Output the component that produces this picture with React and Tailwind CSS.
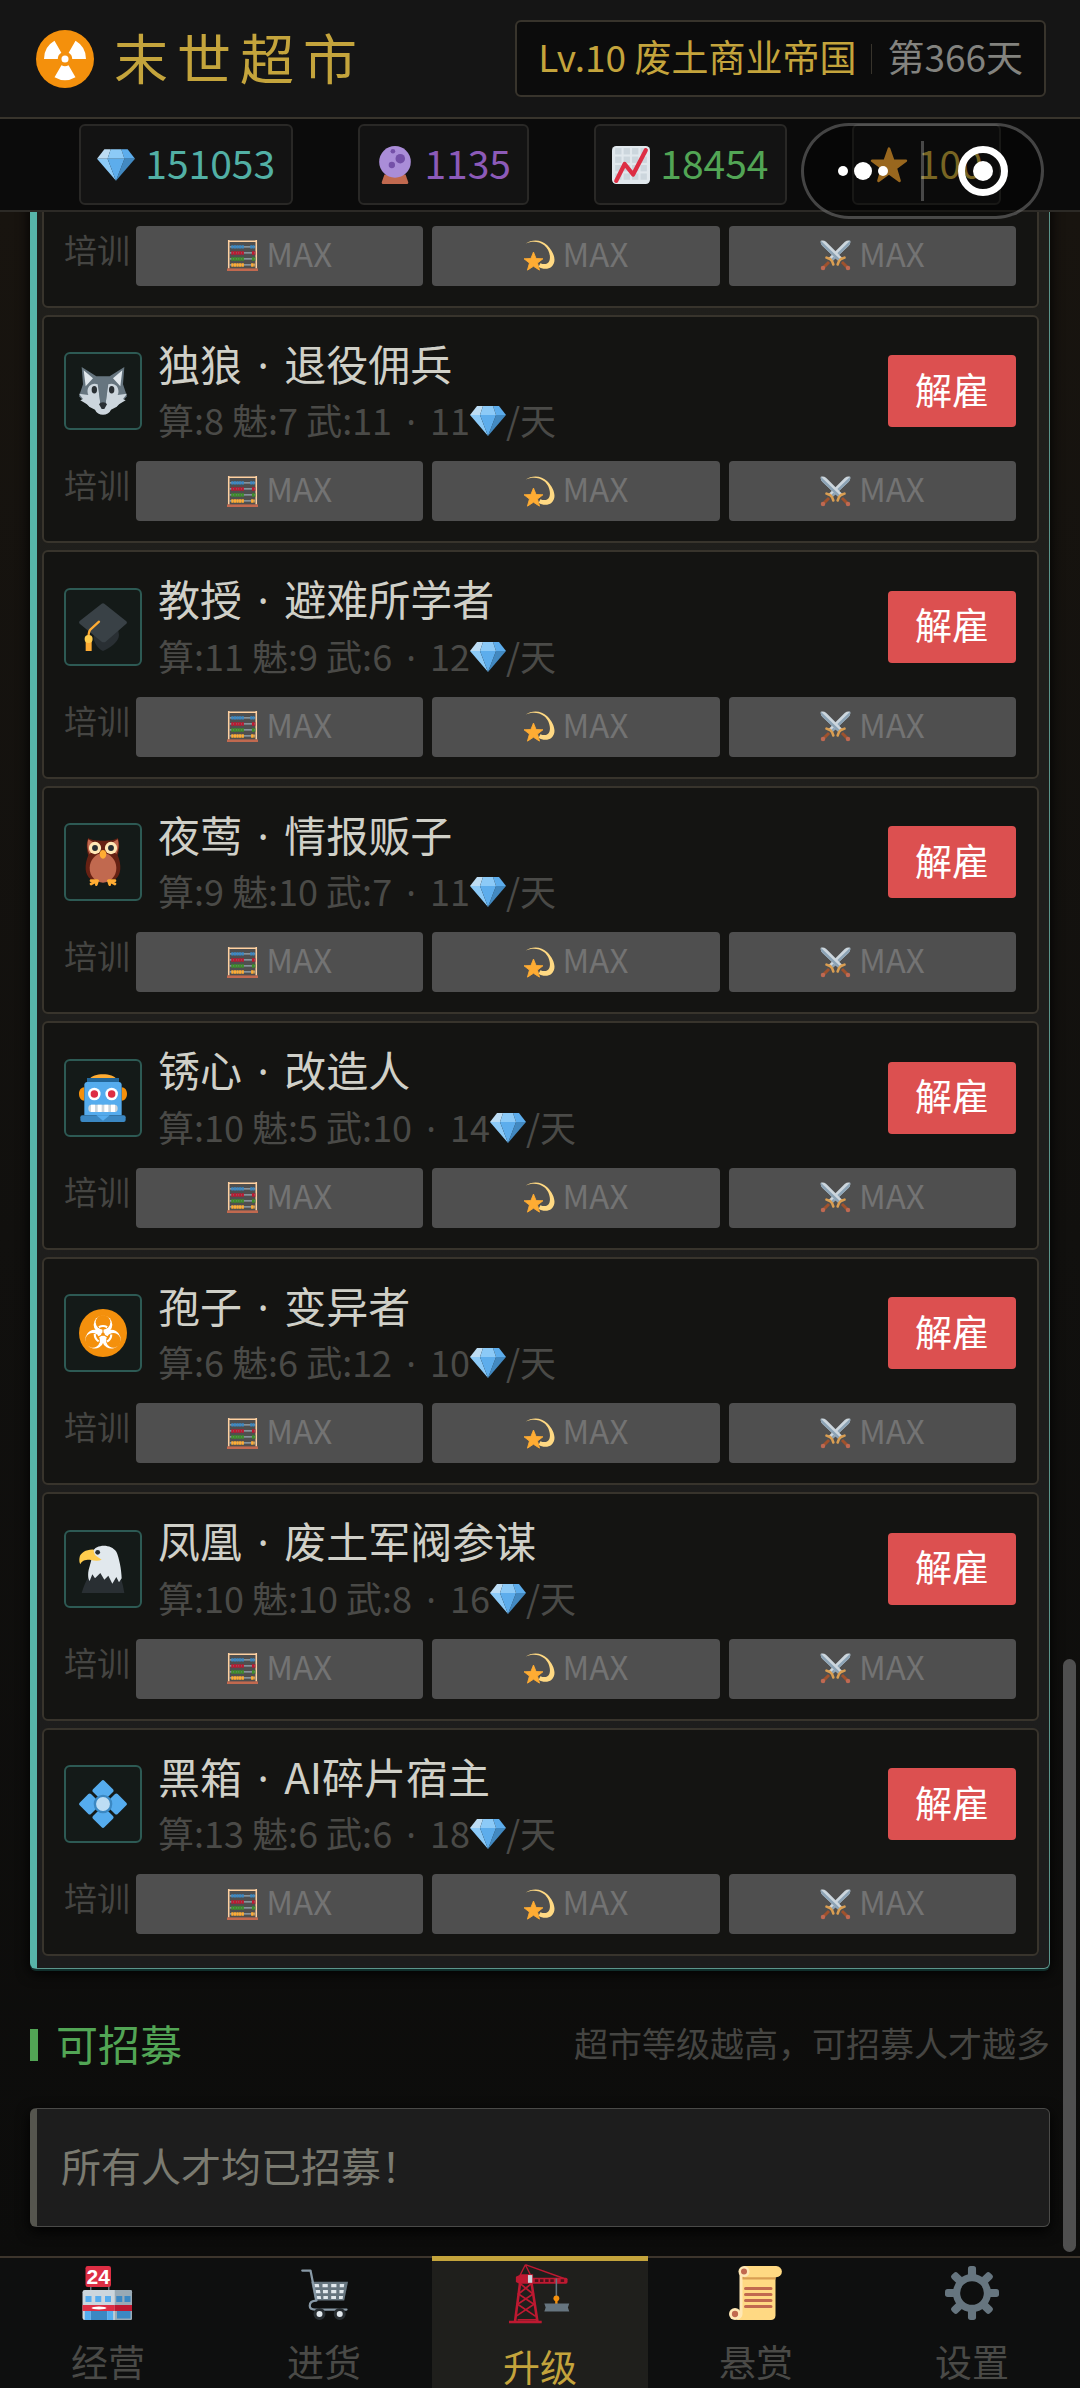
import React from "react";

const GemIcon = ({ className }) => (
  <svg viewBox="0 0 36 36" className={className} aria-hidden="true">
    <path fill="#bdddf4" d="M13 3H7l-7 9h10z" />
    <path fill="#5dadec" d="M36 12l-7-9h-6l3 9z" />
    <path fill="#4289c1" d="M26 12h10L18 33z" />
    <path fill="#8ccaf7" d="M10 12H0l18 21zm3-9l-3 9h16l-3-9z" />
    <path fill="#5dadec" d="M18 33l-8-21h16z" />
  </svg>
);

const RadiationIcon = ({ className }) => {
  const blade =
    "M20.2 21.9L24.5 29.3A13 13 0 0 1 11.5 29.3L15.8 21.9A4.5 4.5 0 0 0 20.2 21.9Z";
  return (
    <svg viewBox="0 0 36 36" className={className} aria-hidden="true">
      <circle cx="18" cy="18" r="18" fill="#f4900c" />
      <g fill="#fff">
        <circle cx="18" cy="18" r="2.2" />
        <path d={blade} />
        <path d={blade} transform="rotate(120 18 18)" />
        <path d={blade} transform="rotate(240 18 18)" />
      </g>
    </svg>
  );
};

const CrystalBallIcon = ({ className }) => (
  <svg viewBox="0 0 36 36" className={className} aria-hidden="true">
    <path fill="#c1694f" d="M8 27h20l2.5 7c.4 1.2-.4 2-1.5 2H7c-1.1 0-1.9-.8-1.5-2z" />
    <circle cx="18" cy="15" r="15" fill="#aa8dd8" />
    <circle cx="23" cy="12" r="4.5" fill="#7450a8" />
    <circle cx="15" cy="18" r="3" fill="#7450a8" />
    <circle cx="16" cy="5" r="2.2" fill="#7450a8" />
  </svg>
);

const ChartIcon = ({ className }) => (
  <svg viewBox="0 0 36 36" className={className} aria-hidden="true">
    <rect width="36" height="36" rx="4" fill="#e1e8ed" />
    <g fill="#ccd6dd">
      {[2, 10, 18, 26].map((y) =>
        [3, 11, 19, 27].map((x) => (
          <rect key={`${x}-${y}`} x={x} y={y} width="6" height="6" />
        ))
      )}
    </g>
    <path
      d="M4 33L12 17l8 10L32 4"
      fill="none"
      stroke="#dd2e44"
      strokeWidth="4"
      strokeLinecap="round"
      strokeLinejoin="round"
    />
  </svg>
);

const StarIcon = ({ className }) => (
  <svg viewBox="0 0 36 36" className={className} aria-hidden="true">
    <path
      fill="#ffac33"
      stroke="#ffac33"
      strokeWidth="2.5"
      strokeLinejoin="round"
      d="M18 2.500l4 11.500h12l-9.600 7L28 33l-10-7.200L8 33l3.600-12L2 14h12z"
    />
  </svg>
);

const AbacusIcon = ({ className }) => (
  <svg viewBox="0 0 36 36" className={className} aria-hidden="true">
    <path
      fill="none"
      stroke="#ffd1a1"
      strokeWidth="1.8"
      d="M2 0v33M34 0v33M2 1.500h32"
    />
    <path stroke="#99aab5" strokeWidth="1.5" d="M3 8h30M3 15h30M3 22h30M3 29h30" />
    <g strokeWidth="4" strokeDasharray="2.6 .4">
      <path stroke="#3b88c3" d="M5 8h15M27 8h5" />
      <path stroke="#be1931" d="M5 15h15M29 15h4" />
      <path stroke="#3e8e2a" d="M5 22h15M29 22h4" />
      <path stroke="#ffac33" d="M5 29h15M28 29h4" />
    </g>
    <rect y="33" width="36" height="3" fill="#c1694f" />
  </svg>
);

const DizzyIcon = ({ className }) => (
  <svg viewBox="0 0 36 36" className={className} aria-hidden="true">
    <path
      fill="#ffd983"
      d="M2 4C9-1 20-1 27 6c9 9 11 20 5 25-4 3.500-11 3-15 0l2-4c5 2 9 1 10.500-3 2-6-1-14-6-18C17 1 9 1 2 4z"
    />
    <path
      fill="#ffac33"
      stroke="#ffac33"
      strokeLinejoin="round"
      d="M11 14l3 7.500 8 .3-6.300 5L18 35l-7-4.500L4 35l2.300-8.200L0 21.800l8-.3z"
    />
  </svg>
);

const Sword = () => (
  <>
    <path fill="#ccd6dd" d="M1 1c2-1 4-.5 6 1l19 19-4 4L3 7C1 5 .5 3 1 1z" />
    <path fill="#8ca3b5" d="M1 1l23 22-2 2L3 7C1 5 .5 3 1 1z" />
    <path stroke="#d99e52" strokeWidth="3" strokeLinecap="round" d="M20.500 28.500l1.500-4 2.500-2.500 4-1.500" fill="none" />
    <path stroke="#a0522d" strokeWidth="3.4" d="M25.500 25.500l6 6" />
    <circle cx="32.500" cy="32.500" r="2.6" fill="#bf6952" />
  </>
);

const SwordsIcon = ({ className }) => (
  <svg viewBox="0 0 36 36" className={className} aria-hidden="true">
    <g transform="matrix(-1 0 0 1 36 0)">
      <Sword />
    </g>
    <Sword />
  </svg>
);

const WolfIcon = ({ className }) => (
  <svg viewBox="0 0 36 36" className={className} aria-hidden="true">
    <path fill="#66757f" d="M2 0l11 7h10L34 0l-1 13 3 9-8 8H8l-8-8 3-9z" />
    <path fill="#e1e8ed" d="M3.500 2.500l7 6-5.500 6zM32.500 2.500l-7 6 5.500 6z" />
    <path
      fill="#ccd6dd"
      d="M14 13c-6-2-9 4-7 8l-7-1 3 4-2 1 5 3 2 2 4 2c2 5 10 5 12 0l4-2 2-2 5-3-2-1 3-4-7 1c2-4-1-10-7-8l-2 14h-4z"
    />
    <path fill="#66757f" d="M14.500 12h7L20 28h-4z" />
    <ellipse cx="11.500" cy="17" rx="2" ry="2.8" fill="#292f33" />
    <ellipse cx="24.500" cy="17" rx="2" ry="2.8" fill="#292f33" />
    <path fill="#292f33" d="M15 28c1-2 5-2 6 0l-2 3.500h-2z" />
  </svg>
);

const GradCapIcon = ({ className }) => (
  <svg viewBox="0 0 36 36" className={className} aria-hidden="true">
    <path fill="#292f33" d="M11 21l18-3 1 6c0 5-7 10-12 12-3-1-6-5-7-9z" />
    <path fill="#394146" d="M17 .6c.6-.6 1.4-.6 2 0l16.500 13c.6.6.6 1.4 0 2L20 29c-.6.6-2.400.6-3 0L.5 15.500c-.6-.6-.6-1.400 0-2z" />
    <path fill="none" stroke="#ffac33" strokeWidth="1.7" strokeLinecap="round" d="M15 14L8.500 20c-1 1-1.300 3-1.500 6" />
    <path fill="#ffac33" d="M5 28h4.500v8.500h-4.500z" />
    <circle cx="7.2" cy="27" r="3" fill="#ffcc4d" />
  </svg>
);

const OwlIcon = ({ className }) => (
  <svg viewBox="0 0 36 36" className={className} aria-hidden="true">
    <path fill="#662113" d="M7 0c3 2 6 2 11 2s8 0 11-2c2 4 1 10 0 13 3 7 3 15-2 18H9c-5-3-5-11-2-18C6 10 5 4 7 0z" />
    <path fill="#c1694f" d="M7 1c3 2 5 3 8 4l-7 7C6 9 6 4 7 1zM29 1c-3 2-5 3-8 4l7 7c2-3 2-8 1-11z" />
    <ellipse cx="18" cy="22.5" rx="10" ry="11" fill="#c1694f" />
    <circle cx="12" cy="7.5" r="4.6" fill="#ffe8b6" />
    <circle cx="24" cy="7.5" r="4.6" fill="#ffe8b6" />
    <circle cx="12" cy="7.5" r="2.2" fill="#292f33" />
    <circle cx="24" cy="7.5" r="2.2" fill="#292f33" />
    <path fill="#ffac33" d="M15.500 12c0-4 5-4 5 0 0 2-1 3.500-2.500 3.500S15.500 14 15.500 12z" />
    <path stroke="#ffac33" strokeWidth="2" strokeLinecap="round" fill="none" d="M9 32h5l-5 2.500M14 32l-1 3M27 32h-5l5 2.500M22 32l1 3" />
  </svg>
);

const RobotIcon = ({ className }) => (
  <svg viewBox="0 0 36 36" className={className} aria-hidden="true">
    <path fill="#f4900c" d="M4 10c-3 0-4 3-4 5s1 5 4 5zM32 10c3 0 4 3 4 5s-1 5-4 5z" />
    <path fill="#ffac33" d="M8 4c2-5 18-5 20 0z" />
    <path fill="#226699" d="M6 3h24v5H6z" />
    <path fill="#55acee" d="M4 8c0-1 1-2 2-2h24c1 0 2 1 2 2v23H4z" />
    <rect x="1" y="31" width="34" height="5" rx="1.5" fill="#3b88c3" />
    <path fill="#55acee" d="M13 31h10l-5 4z" />
    <circle cx="11.5" cy="15" r="4.7" fill="#fff" />
    <circle cx="24.5" cy="15" r="4.7" fill="#fff" />
    <circle cx="11.5" cy="15" r="2.8" fill="#dd2e44" />
    <circle cx="24.5" cy="15" r="2.8" fill="#dd2e44" />
    <rect x="7" y="23" width="22" height="5.5" rx="2.5" fill="#ccd6dd" />
    <path fill="#fff" d="M9 23h3v5.500H9zM14 23h3v5.500h-3zM19 23h3v5.500h-3zM24 23h3v5.500h-3z" />
  </svg>
);

const BiohazardIcon = ({ className }) => (
  <svg viewBox="0 0 36 36" className={className} aria-hidden="true">
    <circle cx="18" cy="18" r="18" fill="#f4900c" />
    {[0, 120, 240].map((angle) => (
      <circle key={angle} cx="18" cy="11.8" r="7" fill="#fff" transform={`rotate(${angle} 18 19)`} />
    ))}
    {[0, 120, 240].map((angle) => (
      <g key={angle} fill="#f4900c" transform={`rotate(${angle} 18 19)`}>
        <circle cx="18" cy="10" r="5.5" />
        <path d="M17.600 14h.8v4h-.8z" />
      </g>
    ))}
    <circle
      cx="18"
      cy="19"
      r="6.2"
      fill="none"
      stroke="#fff"
      strokeWidth="1.6"
      strokeDasharray="6.49 6.49"
      transform="rotate(-120 18 19)"
    />
    <circle cx="18" cy="19" r="1.3" fill="#f4900c" />
  </svg>
);

const EagleIcon = ({ className }) => (
  <svg viewBox="0 0 36 36" className={className} aria-hidden="true">
    <path fill="#292f33" d="M2 36c2-6 4-12 8-15h18c4 3 5 9 6 15z" />
    <path
      fill="#e1e8ed"
      d="M10 5c3-6 14-6 18 0 2 4 4 14 4 20l-2 3-2-4-3 5-3-6-3 3-3-5-4 4-2-3-2 5c-2-3-1-8 0-11 1-4 2-6 1-8z"
    />
    <path fill="#ffcc4d" d="M11 3.500C6 3 1 6 .5 9c-.5 2-.3 4 .5 5.500 1-2.500 3-3.500 7-3.500 4 1 7 1 9 0l-3-2c-2-1-3-3-3-5.500z" />
    <circle cx="14" cy="5.5" r="1.8" fill="#292f33" />
  </svg>
);

const BlossomIcon = ({ className }) => (
  <svg viewBox="0 0 36 36" className={className} aria-hidden="true">
    <g fill="#55acee">
      {[0, 90, 180, 270].map((angle) => (
        <path
          key={angle}
          transform={`rotate(${angle} 18 18)`}
          d="M17 .5c.6-.6 1.4-.6 2 0l6.500 6.500c.6.6.6 1.4 0 2L20 14.500h-4L10.500 9c-.6-.6-.6-1.400 0-2z"
        />
      ))}
    </g>
    <circle cx="18" cy="18" r="7" fill="#3b88c3" />
    <circle cx="18" cy="18" r="5.2" fill="#bdddf4" />
  </svg>
);

const StoreIcon = ({ className }) => (
  <svg viewBox="0 0 36 36" className={className} aria-hidden="true">
    <path fill="#66757f" d="M6 13h1v4H6zM18 13h1v4h-1z" />
    <rect x="3" width="17" height="14" rx="1.5" fill="#dd2e44" />
    <text
      x="11.5"
      y="12"
      textAnchor="middle"
      fontSize="14"
      fontWeight="700"
      fontFamily="Liberation Sans, sans-serif"
      fill="#fff">
      24
    </text>
    <rect x="1" y="16" width="33" height="20" rx="1.5" fill="#ccd6dd" />
    <path fill="#99aab5" d="M22.500 16H33c.6 0 1 .4 1 1v18c0 .6-.4 1-1 1H22.500z" />
    <path fill="#55acee" d="M3 20h4v4H3zM9.500 20h4v4h-4zM16 20h4v4h-4z" />
    <path fill="#3b88c3" d="M23.500 20h4v4h-4zM29 20h4v4h-4zM6.500 30h11v6h-11zM24 30h9v5h-9z" />
    <path fill="#55acee" d="M2.500 30h4v6h-4zM17.500 30h4v6h-4z" />
    <path fill="#dd2e44" d="M1 26h21.500v4H1z" />
    <path fill="#be1931" d="M22.500 26H34v4H22.500z" />
    <ellipse cx="12" cy="28" rx="5" ry="1" fill="#fff" />
  </svg>
);

const CartIcon = ({ className }) => (
  <svg viewBox="0 0 36 36" className={className} aria-hidden="true">
    <path fill="#66757f" d="M9.500 10.500H34L31.500 23H12z" />
    <g fill="#e1e8ed">
      <path d="M11.500 12h3l.4 2.200h-3zM17 12h3.500v2.200H17zM22.800 12h3.500v2.200h-3.500zM28.500 12h3l-.3 2.200h-2.700z" />
      <path d="M12.300 16h3l.4 2.200h-3zM17.300 16h3.300v2.200h-3.300zM22.800 16h3.400v2.200h-3.400zM28.300 16h2.900l-.3 2.200h-2.600z" />
      <path d="M13 20h2.800l.3 2H13.400zM17.600 20h3v2h-3zM22.800 20H26v2h-3.200zM28 20h2.700l-.3 2H28z" />
    </g>
    <path
      fill="none"
      stroke="#8899a6"
      strokeWidth="1.5"
      strokeLinecap="round"
      strokeLinejoin="round"
      d="M3.500 3H9l4 20c-3 0-4.500 1.500-4.500 3.500S10 29 12 29h21"
    />
    <circle cx="15" cy="32" r="3" fill="#e1e8ed" stroke="#292f33" strokeWidth="2" />
    <circle cx="28.5" cy="32" r="3" fill="#e1e8ed" stroke="#292f33" strokeWidth="2" />
  </svg>
);

const CraneIcon = ({ className }) => (
  <svg viewBox="0 0 36 36" className={className} aria-hidden="true">
    <g fill="none" stroke="#be1931">
      <path strokeWidth="1.5" d="M6.500 11L3.500 34M13 11l3.500 23" />
      <path strokeWidth="1" d="M6.500 12l7.500 6-9 6 10.500 7M13 12l-7.500 6 9 6L4 31" />
      <path strokeWidth=".8" d="M9.500 1L6 8M9.500 1l3 6M9.500 1L32 9" />
      <path strokeWidth="1" d="M5 33h11" />
    </g>
    <rect x="12" y="8.5" width="22" height="3.5" rx="1" fill="#be1931" />
    <path fill="#50101a" d="M15 9.500h2v1.500h-2zM18 9.500h2v1.500h-2zM21 9.500h2v1.500h-2zM24 9.500h2v1.500h-2zM30 9.500h2v1.500h-2z" />
    <path fill="#be1931" d="M0 33.500h19V35H0zM4 8l3-1.500h7V12H6L4 11z" />
    <path fill="#ccd6dd" d="M11 7h2.500v4.500H11z" />
    <path stroke="#66757f" strokeWidth=".9" d="M27.500 9v11" />
    <circle cx="27.5" cy="20.5" r="1.7" fill="#f4900c" />
    <path stroke="#f4900c" strokeWidth="1.4" d="M27.500 20v4" />
    <path fill="#66757f" d="M20.500 23.500h14.500l-.8 2.300.8 2.400H20.500l.8-2.400z" />
  </svg>
);

const ScrollIcon = ({ className }) => (
  <svg viewBox="0 0 36 36" className={className} aria-hidden="true">
    <path fill="#ffe8b6" d="M7 4h4v32H4c2 0 3-2 3-4z" />
    <path fill="#ffd983" d="M9 4h22v29c0 2-1.500 3-3 3H4c3 0 5-2 5-4z" />
    <path fill="#d99e52" d="M9 6h22v3H9z" />
    <path fill="#ffd983" d="M10 0h21.500a3.700 3.700 0 0 1 0 7.500H10z" />
    <circle cx="10" cy="3.7" r="3.7" fill="#ffe8b6" />
    <circle cx="10" cy="3.7" r="2" fill="#c1694f" />
    <circle cx="4" cy="32" r="4" fill="#ffe8b6" />
    <circle cx="4" cy="32" r="2.1" fill="#c1694f" />
    <path stroke="#c1694f" strokeWidth="2" strokeLinecap="round" d="M11 15h17M11 19h17M11 23h17M11 27h17" />
  </svg>
);

const GearIcon = ({ className }) => (
  <svg viewBox="0 0 36 36" className={className} aria-hidden="true">
    <g fill="#66757f">
      {[0, 45, 90, 135, 180, 225, 270, 315].map((angle) => (
        <rect
          key={angle}
          x="15.3"
          width="5.4"
          height="8"
          rx="1.8"
          transform={`rotate(${angle} 18 18)`}
        />
      ))}
    </g>
    <circle cx="18" cy="18" r="10.3" fill="none" stroke="#66757f" strokeWidth="4.8" />
  </svg>
);

const resources = [
  { name: "宝石", value: 151053, Icon: GemIcon, color: "text-[#52b0a5]" },
  { name: "水晶", value: 1135, Icon: CrystalBallIcon, color: "text-[#8c5ab8]" },
  { name: "营收", value: 18454, Icon: ChartIcon, color: "text-[#52a555]" },
  { name: "声望", value: 100, Icon: StarIcon, color: "text-[#c9a93b]" },
];

const staff = [
  { name: "独狼", role: "退役佣兵", calc: 8, charm: 7, force: 11, wage: 11, Icon: WolfIcon },
  { name: "教授", role: "避难所学者", calc: 11, charm: 9, force: 6, wage: 12, Icon: GradCapIcon },
  { name: "夜莺", role: "情报贩子", calc: 9, charm: 10, force: 7, wage: 11, Icon: OwlIcon },
  { name: "锈心", role: "改造人", calc: 10, charm: 5, force: 10, wage: 14, Icon: RobotIcon },
  { name: "孢子", role: "变异者", calc: 6, charm: 6, force: 12, wage: 10, Icon: BiohazardIcon },
  { name: "凤凰", role: "废土军阀参谋", calc: 10, charm: 10, force: 8, wage: 16, Icon: EagleIcon },
  { name: "黑箱", role: "AI碎片宿主", calc: 13, charm: 6, force: 6, wage: 18, Icon: BlossomIcon },
];

const skills = [
  { key: "calc", Icon: AbacusIcon },
  { key: "charm", Icon: DizzyIcon },
  { key: "force", Icon: SwordsIcon },
];

const tabs = [
  { label: "经营", Icon: StoreIcon },
  { label: "进货", Icon: CartIcon },
  { label: "升级", Icon: CraneIcon, active: true },
  { label: "悬赏", Icon: ScrollIcon },
  { label: "设置", Icon: GearIcon },
];

const TrainingRow = () => (
  <div className="flex items-start">
    <span className="mr-1.5 shrink-0 text-[33px] leading-[46px] text-[#454542]">
      培训
    </span>
    <div className="grid flex-1 grid-cols-3 gap-[9px]">
      {skills.map(({ key, Icon }) => (
        <button
          key={key}
          type="button"
          disabled
          className="flex h-[60px] items-center justify-center gap-2 rounded-[4px] bg-[#4f4f4f] text-[33px] text-[#737373]">
          <Icon className="size-[31px]" />
          <span className="pb-1">MAX</span>
        </button>
      ))}
    </div>
  </div>
);

// the CJK face draws a full-width dot, so take it from the Latin one
const Dot = () => (
  <span className="mx-1.5 font-['Noto_Sans',sans-serif] leading-none">·</span>
);

const cardClass =
  "rounded-[6px] border-2 border-[#38342c] bg-[#141412] pr-[21px] pb-5 pl-5";

const StaffCard = ({ person }) => {
  const { name, role, calc, charm, force, wage, Icon } = person;
  return (
    <li className={`${cardClass} pt-5`}>
      <div className="mb-[15px] flex items-center">
        <div className="flex size-[78px] shrink-0 items-center justify-center rounded-[6px] border-2 border-[#2d5a54] bg-[#141a18]">
          <Icon className="size-12" />
        </div>
        <div className="ml-4 min-w-0 flex-1">
          <h3 className="mb-[3px] text-[42px] leading-tight text-[#d0d0c8]">
            {name} <Dot /> {role}
          </h3>
          <p className="text-[36px] leading-[54px] text-[#4a4a47]">
            算:{calc} 魅:{charm} 武:{force} <Dot /> {wage}
            <GemIcon className="inline size-9 align-[-4px]" />
            /天
          </p>
        </div>
        <button
          type="button"
          className="h-[72px] rounded-[4px] bg-[#dc5050] px-[27px] pb-1 text-[37px] text-white">
          解雇
        </button>
      </div>
      <TrainingRow />
    </li>
  );
};

const Capsule = () => (
  <div className="absolute top-[123px] right-9 z-10 flex h-24 w-[243px] items-center rounded-full border-[3px] border-white/25 bg-black/40">
    <button type="button" aria-label="更多" className="flex flex-1 items-center justify-center gap-1.5">
      <span className="size-[10px] rounded-full bg-white" />
      <span className="size-[18px] rounded-full bg-white" />
      <span className="size-[10px] rounded-full bg-white" />
    </button>
    <span className="h-[60px] w-[3px] bg-white/25" />
    <button type="button" aria-label="关闭" className="flex flex-1 items-center justify-center">
      <span className="flex size-[50px] items-center justify-center rounded-full border-[7px] border-white">
        <span className="size-5 rounded-full bg-white" />
      </span>
    </button>
  </div>
);

const App = () => {
  return (
    <div className="relative flex h-screen flex-col overflow-hidden bg-[#0d0d0d] font-['Noto_Sans_CJK_SC',sans-serif]">
      <header className="flex h-[119px] shrink-0 items-center justify-between border-b-2 border-[#38342c] bg-[#151515] pr-[34px] pl-9">
        <div className="flex items-center gap-5">
          <RadiationIcon className="size-[58px]" />
          <h1 className="pb-1 text-[54px] leading-none tracking-[9px] text-[#c4a43c]">
            末世超市
          </h1>
        </div>
        <div className="flex h-[77px] items-center rounded-[6px] border-2 border-[#38342c] bg-[#0c0c0c] px-[21px] text-[37px]">
          <span className="pb-1 text-[#c4a43c]">Lv.10 废土商业帝国</span>
          <span className="mx-[15px] h-[30px] w-px bg-[#38342c]" />
          <span className="pb-1 text-[#83837f]">第366天</span>
        </div>
      </header>

      <div className="flex h-[93px] shrink-0 items-center justify-evenly border-b-2 border-[#2c2a26] bg-[#0b0b0b] px-[14px]">
        {resources.map(({ name, value, Icon, color }) => (
          <div
            key={name}
            title={name}
            className={`flex h-[81px] items-center gap-2.5 rounded-[6px] border-2 border-[#292826] bg-[#131313] px-4 text-[39px] ${color}`}>
            <Icon className="size-[38px]" />
            <span className="pb-1">{value}</span>
          </div>
        ))}
      </div>

      <Capsule />

      <main className="relative flex min-h-0 flex-1 flex-col justify-end overflow-hidden bg-linear-to-b from-[#18140f] via-[#11100e] to-[#0c0c0b] px-[30px] pb-[29px]">
        <ul className="flex shrink-0 flex-col gap-[7px] rounded-[6px] border border-l-[7px] border-[#5b958b] border-l-[#57b5a9] bg-linear-to-b from-[#201f1b] to-[#1d1d1d] pt-3 pr-[10px] pb-3 pl-[5px] shadow-[0_2px_0_#102e2b,0_4px_14px_#000]">
          <li className={`${cardClass} pt-32`}>
            <TrainingRow />
          </li>
          {staff.map((person) => (
            <StaffCard key={person.name} person={person} />
          ))}
        </ul>

        <div className="flex h-[139px] shrink-0 items-center justify-between pt-3">
          <h2 className="flex items-center gap-[18px] text-[42px] text-[#52a555]">
            <span className="h-8 w-2 bg-[#52a555]" />
            <span className="pb-1">可招募</span>
          </h2>
          <p className="pb-1 text-[34px] text-[#454542]">
            超市等级越高，可招募人才越多
          </p>
        </div>

        <div className="flex h-[119px] shrink-0 items-center rounded-[6px] border border-l-[7px] border-[#4a4a48] border-l-[#55554e] bg-[#1d1d1d] px-6 pb-1.5 text-[40px] text-[#7a7a70] shadow-[0_4px_14px_#000]">
          所有人才均已招募！
        </div>

        <div className="absolute right-1 bottom-1 h-[29%] w-[13px] rounded-full bg-[#4f4f4f]" />
      </main>

      <nav className="grid h-[132px] shrink-0 grid-cols-5 bg-[#0e0f0f]">
        {tabs.map(({ label, Icon, active }) => (
          <button
            key={label}
            type="button"
            className={`flex flex-col items-center text-[37px] ${
              active
                ? "border-t-[5px] border-[#c4a43c] bg-[#1f1f1c] text-[#c4a43c]"
                : "border-t-2 border-[#3d352c] pt-2 text-[#4a4a47]"
            }`}>
            <Icon className={active ? "mt-0.5 size-[62px]" : "size-[54px]"} />
            <span className="mt-5 leading-[42px]">{label}</span>
          </button>
        ))}
      </nav>
    </div>
  );
};

export default App;
